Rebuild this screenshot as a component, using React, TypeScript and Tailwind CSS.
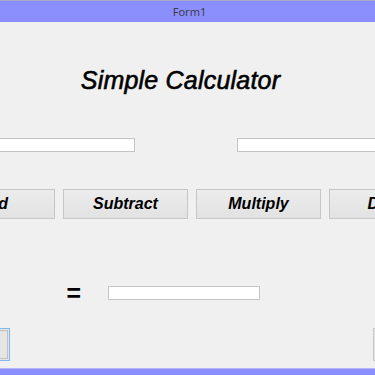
import React from "react";

const fontArial = { fontFamily: '"Liberation Sans", Arial, sans-serif' };

function Btn({ label, className = "" }: { label: string; className?: string }) {
  return (
    <div
      className={`h-[30px] w-[125px] shrink-0 flex items-center justify-center border border-[#c6c6c6] bg-gradient-to-b from-[#ececec] to-[#e2e2e2] text-[16px] font-bold italic text-black ${className}`}
      style={fontArial}
    >
      {label}
    </div>
  );
}

export default function App() {
  return (
    <div className="w-[375px] h-[375px] overflow-hidden bg-[#f0f0f0] flex flex-col" style={fontArial}>
      {/* title bar */}
      <div className="h-[22px] shrink-0 border-t border-[#a9a9c4] bg-[#8b8ffe] flex items-center justify-center">
        <span className="text-[11px] text-[#3c3c4c] leading-none ml-[4px]" style={{ fontFamily: '"Noto Sans", sans-serif' }}>
          Form1
        </span>
      </div>

      {/* content */}
      <div className="flex-1 flex flex-col min-h-0">
        <div className="h-[44px] shrink-0" />
        <div className="h-[28px] flex items-center justify-center shrink-0">
          <span className="text-[25px] italic text-black leading-none ml-[-14px] tracking-[0.2px] [-webkit-text-stroke:0.6px_black]">Simple Calculator</span>
        </div>
        <div className="h-[44px] shrink-0" />
        {/* input row */}
        <div className="flex h-[14px] shrink-0">
          <div className="ml-[-20px] w-[155px] h-[14px] bg-white border border-[#c4c4c4] shrink-0" />
          <div className="ml-[102px] w-[150px] h-[14px] bg-white border border-[#c4c4c4] shrink-0" />
        </div>
        <div className="h-[37px] shrink-0" />
        {/* operation buttons */}
        <div className="flex gap-[8px] ml-[-70px] shrink-0">
          <Btn label="Add" />
          <Btn label="Subtract" />
          <Btn label="Multiply" />
          <Btn label="Divide" />
        </div>
        <div className="h-[67px] shrink-0" />
        {/* result row */}
        <div className="flex items-center h-[14px] shrink-0">
          <span className="ml-[66px] w-[42px] text-[25px] font-bold italic text-black leading-none">=</span>
          <div className="w-[152px] h-[14px] bg-white border border-[#c4c4c4] shrink-0" />
        </div>
        <div className="h-[28px] shrink-0" />
        {/* bottom buttons */}
        <div className="flex justify-between h-[33px] shrink-0">
          <div className="ml-[-80px] w-[90px] h-[33px] border border-[#7fb7f0] bg-[#e5e5e5] p-[1px]">
            <div className="w-full h-full border border-[#c0c0c0]" />
          </div>
          <div className="mr-[-80px] w-[82px] h-[33px] border border-[#c6c6c6] bg-[#e6e6e6]" />
        </div>
      </div>

      {/* bottom border */}
      <div className="h-[7px] shrink-0 border-t border-[#b3b5ff] bg-[#8b8ffe]" />
    </div>
  );
}
